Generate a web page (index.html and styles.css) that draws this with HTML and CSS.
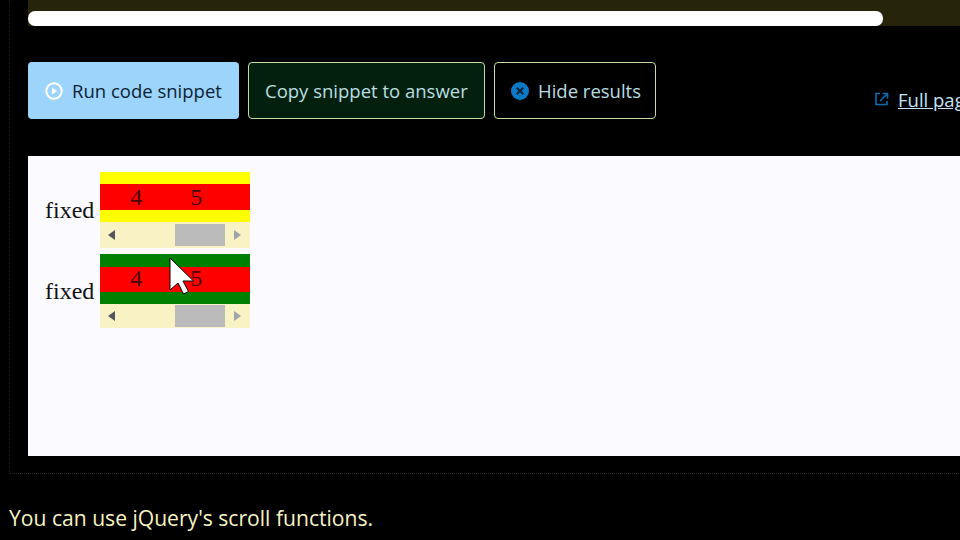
FILE: index.html
```html
<!DOCTYPE html>
<html lang="en">
<head>
  <meta charset="UTF-8">
  <title>Run code snippet</title>
  <link rel="stylesheet" href="styles.css">
</head>
<body>
  <div class="snippet">
    <div class="code-scroll">
      <div class="code-thumb"></div>
    </div>

    <div class="actions">
      <button class="btn btn-run">
        <svg class="icon" width="18" height="18" viewBox="0 0 18 18">
          <circle cx="9" cy="9" r="7.700" fill="none" stroke="#fff" stroke-width="2"/>
          <path d="M7 5.500v7l5.200-3.500z" fill="#fff"/>
        </svg>
        Run code snippet
      </button>
      <button class="btn btn-copy">Copy snippet to answer</button>
      <button class="btn btn-hide">
        <svg class="icon" width="18" height="18" viewBox="0 0 18 18">
          <circle cx="9" cy="9" r="9" fill="#0a7ac8"/>
          <path d="M5.800 5.800l6.400 6.400M12.200 5.800l-6.400 6.400" stroke="#03263f" stroke-width="2.200"/>
        </svg>
        Hide results
      </button>
      <a class="full-page" href="#">
        <svg class="icon" width="14" height="14" viewBox="0 0 14 14">
          <path d="M5 1.500H1v11h11V9" fill="none" stroke="#0a6cb4" stroke-width="1.600"/>
          <path d="M5 9l6.500-6.500M7.500 1.500h5v5" fill="none" stroke="#0a6cb4" stroke-width="1.600"/>
        </svg>
        <span class="full-page-text">Full page demo</span>
      </a>
    </div>

    <div class="result">
      <div class="row">
        <span class="label">fixed</span>
        <div class="scroller">
          <div class="band band-yellow">
            <div class="cells"><span>4</span><span>5</span></div>
          </div>
          <div class="bar">
            <span class="arrow arrow-left"></span>
            <span class="bar-thumb"></span>
            <span class="arrow arrow-right"></span>
          </div>
        </div>
      </div>
      <div class="row">
        <span class="label">fixed</span>
        <div class="scroller">
          <div class="band band-green">
            <div class="cells"><span>4</span><span>5</span></div>
          </div>
          <div class="bar bar-short">
            <span class="arrow arrow-left"></span>
            <span class="bar-thumb"></span>
            <span class="arrow arrow-right"></span>
          </div>
        </div>
      </div>

      <!-- mouse pointer from the recording -->
      <svg class="cursor" width="26" height="38" viewBox="0 0 26 38">
        <path d="M1 1v32l8-7 5.500 11 5-2.500-5.500-10.500h10.500z" fill="#fff" stroke="#000" stroke-width="1"/>
      </svg>
    </div>
  </div>

  <p class="answer">You can use jQuery's scroll functions.</p>
</body>
</html>
```

FILE: styles.css
```css
html, body {
  height: 100%;
}

body {
  margin: 0;
  background: #000;
  font-family: "Open Sans", "Noto Sans", sans-serif;
  overflow: hidden;
}

.snippet {
  width: 1200px;
  height: 474px;
  margin-left: 9px;
  padding-left: 18px;
  box-sizing: border-box;
  border-left: 1px dotted #1c1c30;
  border-bottom: 1px dotted #26262a;
}

/* top scrollbar of the code block */
.code-scroll {
  height: 26px;
  display: flex;
  align-items: flex-end;
  background: #26240a;
}

.code-thumb {
  width: 855px;
  height: 15px;
  background: #fff;
  border-radius: 7px;
}

.actions {
  display: flex;
  gap: 9px;
  margin-top: 36px;
}

.btn {
  display: flex;
  align-items: center;
  gap: 9px;
  height: 57px;
  padding: 0 16px;
  box-sizing: border-box;
  font-family: inherit;
  font-size: 18.5px;
  white-space: nowrap;
  border-radius: 4px;
  border: 1px solid #c6dca8;
}

.icon {
  flex: none;
}

.btn-run {
  width: 211px;
  padding: 0 17px;
  border: 0;
  color: #0c2334;
  background: #9cd4fc;
}

.btn-copy {
  width: 237px;
  color: #b9dfe0;
  background: #03200f;
}

.btn-hide {
  width: 162px;
  color: #b9dfe0;
  background: #000;
}

.full-page {
  display: flex;
  align-items: center;
  gap: 9px;
  margin: 25px 0 0 210px;
  height: 24px;
  font-size: 18.5px;
  color: #c4e4f6;
  text-decoration: none;
  white-space: nowrap;
}

.full-page-text {
  text-decoration: underline;
}

.result {
  position: relative;
  height: 300px;
  margin-top: 37px;
  padding: 16px 0 0 17px;
  box-sizing: border-box;
  background: #fbfbff;
  display: flex;
  flex-direction: column;
  gap: 6px;
}

.row {
  display: flex;
  align-items: center;
  gap: 6px;
}

.label {
  font-family: "Liberation Serif", serif;
  font-size: 24px;
  color: #111;
}

.scroller {
  width: 150px;
}

.band {
  height: 50px;
  display: flex;
  align-items: center;
}

.band-yellow {
  background: #ff0;
}

.band-green {
  background: #008000;
}

.cells {
  width: 100%;
  height: 26px;
  background: #f00;
  color: #4a0505;
  font-family: "Liberation Serif", serif;
  font-size: 24px;
  line-height: 26px;
  display: flex;
  padding-left: 30px;
  box-sizing: border-box;
  gap: 48px;
}

.band-green .cells {
  height: 25px;
  line-height: 23px;
}

.bar {
  height: 26px;
  display: flex;
  align-items: center;
  background: #f8f2c4;
}

.bar-short {
  height: 24px;
}

.arrow {
  width: 0;
  height: 0;
  border-top: 5px solid transparent;
  border-bottom: 5px solid transparent;
}

.arrow-left {
  margin-left: 8px;
  border-right: 7px solid #55555f;
}

.arrow-right {
  margin-left: 9px;
  border-left: 7px solid #a2a2aa;
}

.bar-thumb {
  width: 50px;
  height: 22px;
  margin-left: 60px;
  background: #bbb;
}

.cursor {
  position: absolute;
  left: 141px;
  top: 101px;
}

.answer {
  margin: 29px 0 0 9px;
  font-size: 21.1px;
  line-height: 29px;
  color: #f7f3c2;
}
```
